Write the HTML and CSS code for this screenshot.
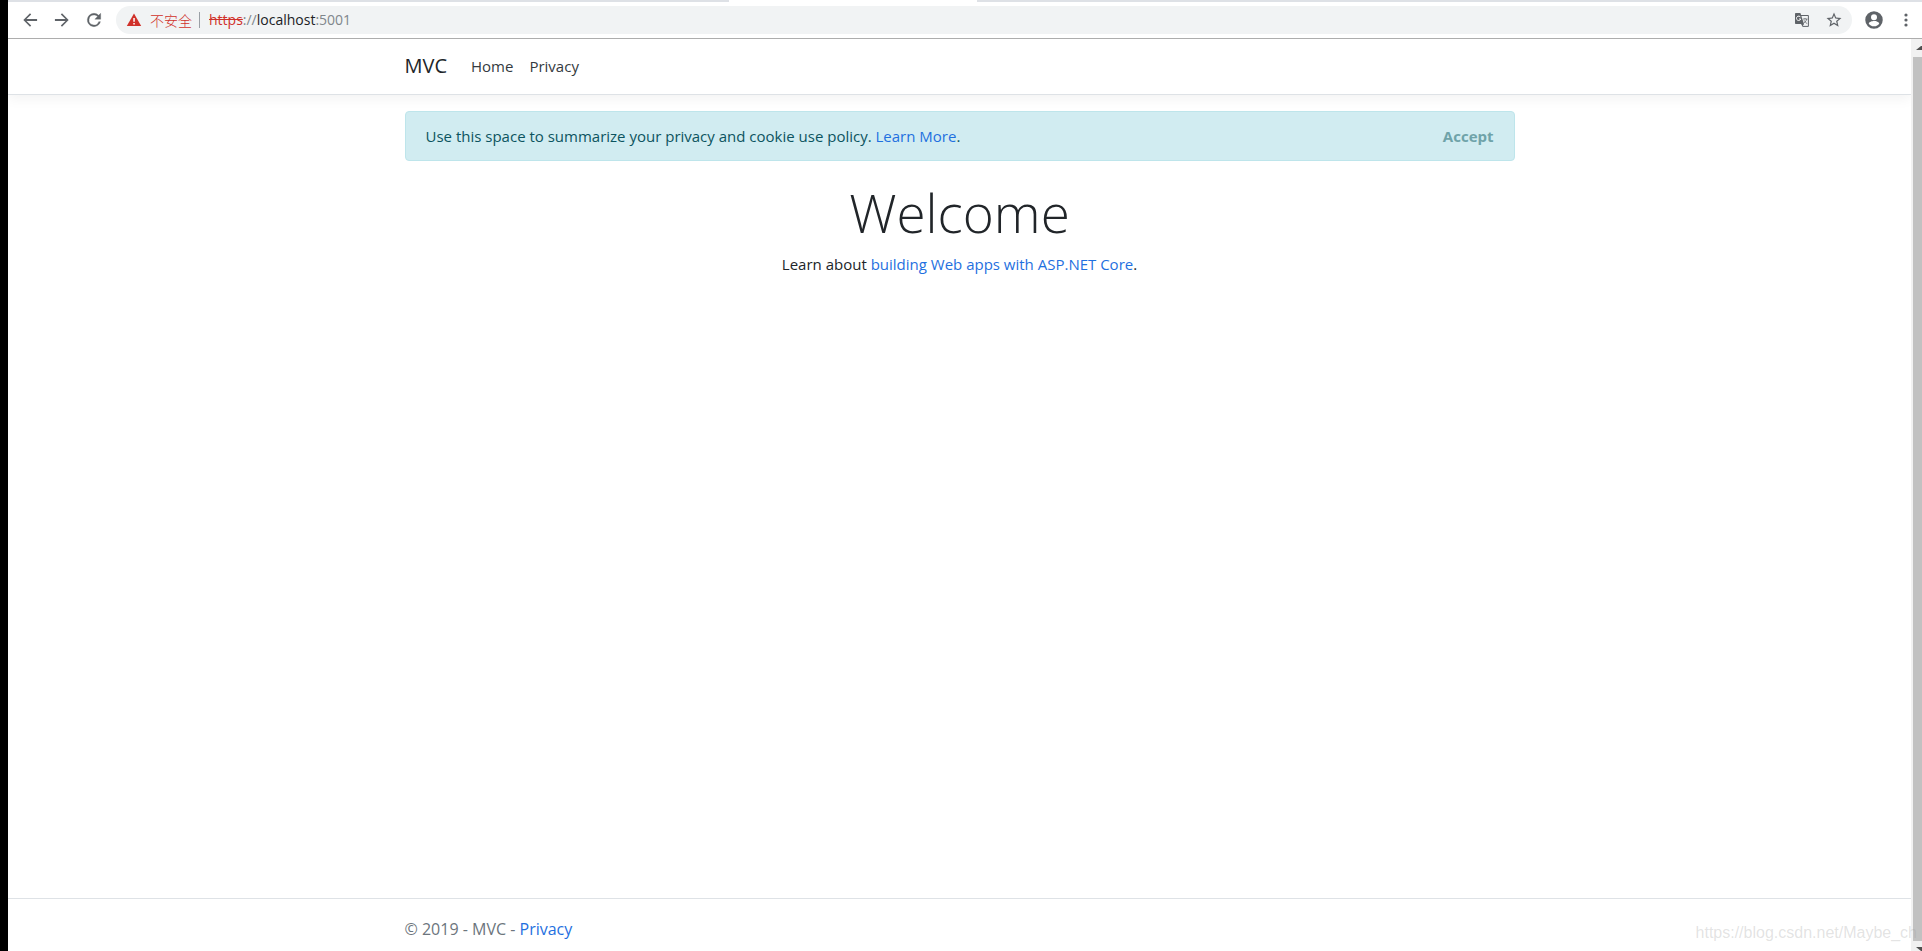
FILE: index.html
```
<!DOCTYPE html>
<html lang="en">
<head>
<meta charset="utf-8">
<title>Home Page - MVC</title>
<link rel="stylesheet" href="styles.css">
</head>
<body>
<div class="browser">
  <div class="tabstrip"><div class="tab-active"></div></div>
  <div class="toolbar">
    <button class="icon-btn" aria-label="Back"><svg width="20" height="20" viewBox="0 0 24 24"><path d="M20.500 10.800H7.830l5.590-5.390L12 4l-8 8 8 8 1.410-1.410L7.830 13.200H20.500z"/></svg></button>
    <button class="icon-btn" aria-label="Forward"><svg width="20" height="20" viewBox="0 0 24 24"><path d="M3.500 13.200h12.670l-5.590 5.390L12 20l8-8-8-8-1.410 1.410 5.580 5.390H3.500z"/></svg></button>
    <button class="icon-btn" aria-label="Reload"><svg width="20" height="20" viewBox="0 0 24 24"><path d="M17.650 6.350A7.960 7.960 0 0 0 12 4a8 8 0 1 0 7.730 10h-2.080A6 6 0 1 1 12 6c1.660 0 3.140.690 4.220 1.780L13 11h7V4z" stroke="#5f6368" stroke-width=".4"/></svg></button>
    <div class="omnibox">
      <svg class="warn" width="16" height="16" viewBox="0 0 16 16"><path fill="#d0312a" d="M8 1.500L15.200 14H.8z"/><path fill="#fff" d="M7.300 6h1.500v3.800H7.300zM7.300 10.900h1.500v1.500H7.300z"/></svg>
      <span class="insecure">不安全</span>
      <span class="divider"></span>
      <span class="url"><s>https</s>://<b>localhost</b>:5001</span>
      <button class="icon-btn translate" aria-label="Translate"><svg width="16" height="16" viewBox="0 0 16 16"><path d="M6.500 3.500H14.400V14.400H8.500" fill="none" stroke="#5f6368" stroke-width="1"/><path d="M1.800 1H6.400L10 12H1.800A.8.8 0 0 1 1 11.200V1.800A.8.8 0 0 1 1.800 1zM7 12h3l-1.500 2.500z"/><path d="M6.600 5.200A2.200 2.200 0 1 0 6.800 7H5" fill="none" stroke="#fff" stroke-width="1"/><path d="M9 7h4.500M11 6v1M12.800 7c-.4 1.600-1.500 3-3 4M10 8.300l3 3.500" fill="none" stroke="#5f6368" stroke-width=".8"/></svg></button>
      <button class="icon-btn" aria-label="Bookmark"><svg width="18" height="18" viewBox="0 0 24 24"><path d="M22 9.240l-7.190-.62L12 2 9.190 8.630 2 9.240l5.460 4.730L5.820 21 12 17.270 18.180 21l-1.630-7.030zM12 15.400l-3.760 2.270 1-4.280-3.320-2.880 4.380-.38L12 6.100l1.710 4.040 4.380.38-3.320 2.880 1 4.280z"/></svg></button>
    </div>
    <button class="icon-btn" aria-label="Profile"><svg width="20" height="20" viewBox="0 0 24 24"><path d="M12 1.500a10.500 10.500 0 1 0 0 21 10.500 10.500 0 0 0 0-21zm0 3.700a3.600 3.600 0 1 1 0 7.200 3.600 3.600 0 0 1 0-7.200zM12 19.500c-2.800 0-5.100-1.300-6.300-3.400.1-2 4.200-3 6.300-3s6.200 1 6.300 3c-1.200 2.100-3.500 3.400-6.300 3.400z"/></svg></button>
    <button class="icon-btn" aria-label="Menu"><svg width="18" height="18" viewBox="0 0 18 18"><circle cx="9" cy="4" r="1.600"/><circle cx="9" cy="9" r="1.600"/><circle cx="9" cy="14" r="1.600"/></svg></button>
  </div>
  <div class="viewport">
    <div class="page">
      <header class="navbar">
        <nav class="container nav">
          <a class="brand" href="#">MVC</a>
          <a href="#">Home</a>
          <a href="#">Privacy</a>
        </nav>
      </header>
      <main class="container main">
        <div class="alert" role="alert">
          <span>Use this space to summarize your privacy and cookie use policy. <a class="link" href="#">Learn More</a>.</span>
          <button class="accept">Accept</button>
        </div>
        <h1>Welcome</h1>
        <p>Learn about <a class="link" href="#">building Web apps with ASP.NET Core</a>.</p>
      </main>
      <footer class="footer"><div class="container">© 2019 - MVC - <a class="link" href="#">Privacy</a></div></footer>
    </div>
    <div class="scrollbar"><i class="up"></i><div class="thumb"></div><i class="down"></i></div>
    <span class="watermark">https://blog.csdn.net/Maybe_ch</span>
  </div>
</div>
</body>
</html>
```
FILE: styles.css
```
* { box-sizing: border-box; }
body { margin: 0; background: #000; font: 15px/24px "Segoe UI", "Open Sans", sans-serif; color: #212529; }
a { color: inherit; text-decoration: none; }
button { border: 0; background: none; padding: 0; font: inherit; }
.browser { height: 100vh; margin-left: 8px; background: #fff; display: flex; flex-direction: column; overflow: hidden; }
.tabstrip { flex: none; height: 2px; background: #dee1e6; }
.tab-active { width: 248px; height: 2px; margin-left: 721px; background: #fff; }
.toolbar { flex: none; height: 37px; display: flex; align-items: center; gap: 12px; padding: 0 6px 1px 12px; border-bottom: 1px solid #adadad; }
.icon-btn { flex: none; width: 20px; height: 20px; display: flex; align-items: center; justify-content: center; fill: #5f6368; }
.omnibox { flex: 1; height: 28px; border-radius: 14px; background: #f1f3f4; display: flex; align-items: center; padding: 0 8px 0 10px; font-size: 14px; color: #80868b; }
.insecure { margin-left: 8px; color: #d0312a; font-family: "Noto Sans CJK SC", sans-serif; font-weight: 300; }
.divider { width: 1px; height: 16px; margin: 0 9px 0 7px; background: #9aa0a6; }
.url s { color: #d0312a; }
.url b { font-weight: 400; color: #202124; }
.translate { margin: 0 12px 0 auto; }
.viewport { flex: 1; min-height: 0; display: flex; position: relative; }
.page { flex: 1; display: flex; flex-direction: column; overflow: hidden; }
.container { width: 100%; max-width: 1140px; margin: 0 auto; padding: 0 15px; }
.navbar { padding: 7px 0 9px; border-bottom: 1px solid #dee2e6; box-shadow: 0 4px 12px rgba(0, 0, 0, .05); }
.nav { display: flex; align-items: center; gap: 16px; height: 39px; color: #343a40; }
.brand { font-size: 20px; margin-right: 8px; color: #212529; }
.main { flex: 1; padding-top: 16px; text-align: center; }
.alert { display: flex; justify-content: space-between; align-items: center; height: 50px; padding: 0 20px; border: 1px solid #bee5eb; border-radius: 4px; background: #d1ecf1; color: #0c5460; }
.accept { font-weight: 700; color: #6fa3a9; }
.link { color: #1f70e0; }
h1 { margin: 18px 0 6px; font-size: 53px; font-weight: 300; line-height: 67px; }
p { margin: 0; }
.footer { flex: none; height: 53px; border-top: 1px solid #dee2e6; font-size: 16px; line-height: 60px; color: #6c757d; }
.scrollbar { flex: none; width: 11px; background: #f1f1f1; display: flex; flex-direction: column; align-items: flex-end; overflow: hidden; }
.thumb { flex: 1; width: 9px; background: #c1c1c1; }
.up, .down { width: 6px; border: 0 solid transparent; border-left-width: 5px; }
.up { height: 11px; margin-bottom: 7px; border-top-width: 7px; border-bottom: 4px solid #505050; }
.down { height: 4px; margin-top: 6px; border-top: 4px solid #505050; }
.watermark { position: absolute; right: 5px; bottom: 6px; font: 16px/24px "Liberation Sans", Arial, sans-serif; color: rgba(160, 160, 160, .3); }
```
